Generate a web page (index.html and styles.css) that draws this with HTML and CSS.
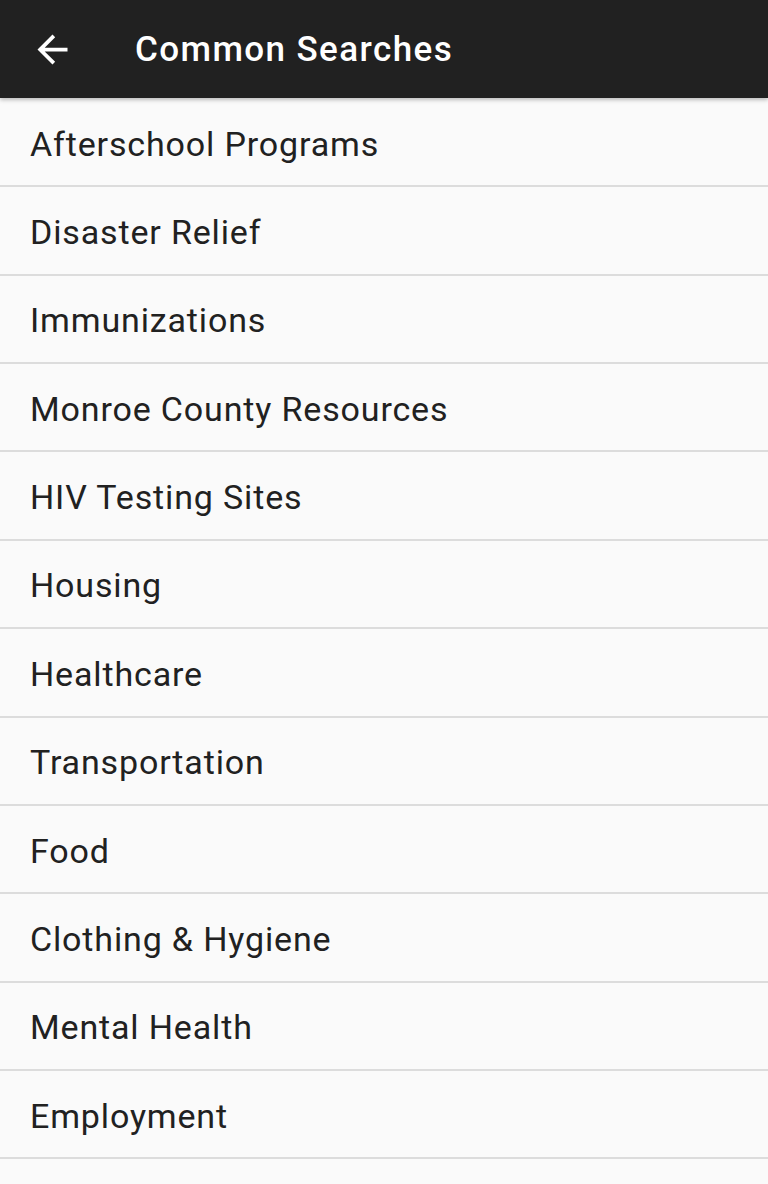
FILE: index.html
```html
<!DOCTYPE html>
<html lang="en">

<head>
    <meta charset="UTF-8">
    <meta name="viewport" content="width=device-width, initial-scale=1.0">
    <title>Common Searches</title>
    <link rel="stylesheet" href="styles.css">
</head>

<body>
    <header class="toolbar">
        <button class="back-btn" aria-label="Back">
            <svg viewBox="0 0 24 24" width="45" height="45">
                <path fill="#fff" d="M20 11H7.83l5.59-5.59L12 4l-8 8 8 8 1.41-1.41L7.83 13H20v-2z" />
            </svg>
        </button>
        <h1 class="toolbar-title">Common Searches</h1>
    </header>

    <ul class="search-list">
        <li class="search-item">Afterschool Programs</li>
        <li class="search-item">Disaster Relief</li>
        <li class="search-item">Immunizations</li>
        <li class="search-item">Monroe County Resources</li>
        <li class="search-item">HIV Testing Sites</li>
        <li class="search-item">Housing</li>
        <li class="search-item">Healthcare</li>
        <li class="search-item">Transportation</li>
        <li class="search-item">Food</li>
        <li class="search-item">Clothing &amp; Hygiene</li>
        <li class="search-item">Mental Health</li>
        <li class="search-item">Employment</li>
    </ul>
</body>

</html>
```

FILE: styles.css
```css
html,
body {
    margin: 0;
    padding: 0;
}

body {
    font-family: Roboto, "Noto Sans", Arial, sans-serif;
    background-color: #fafafa;
    color: #212121;
    height: 1184px;
    overflow: hidden;
}

.toolbar {
    position: relative;
    z-index: 1;
    display: flex;
    align-items: center;
    height: 98px;
    background-color: #212121;
    box-shadow: 0 2px 4px rgba(0, 0, 0, 0.25);
}

.back-btn {
    display: flex;
    align-items: center;
    justify-content: center;
    width: 60px;
    height: 60px;
    margin-left: 22px;
    padding: 0;
    background: none;
    border: none;
}

.toolbar-title {
    margin: 0 0 0 53px;
    font-size: 35px;
    font-weight: 500;
    letter-spacing: 1.4px;
    color: #fff;
}

.search-list {
    list-style: none;
    margin: 0;
    padding: 1px 0 0;
}

.search-item {
    display: flex;
    align-items: center;
    box-sizing: border-box;
    height: 88.36px;
    padding: 3px 0 0 30px;
    border-bottom: 2px solid #dcdcdc;
    font-size: 34px;
    letter-spacing: 0.85px;
}
```
